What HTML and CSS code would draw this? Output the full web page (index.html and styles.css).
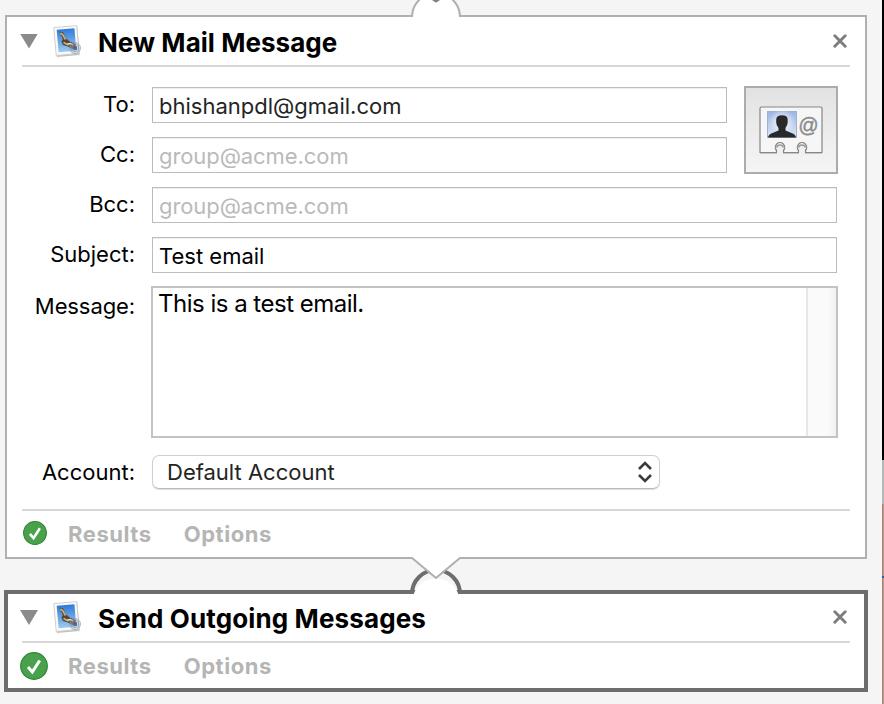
FILE: index.html
```html
<!DOCTYPE html>
<html lang="en">
<head>
<meta charset="utf-8">
<title>Mail workflow</title>
<link rel="stylesheet" href="styles.css">
</head>
<body>
<svg width="0" height="0" class="defs" aria-hidden="true">
  <defs>
    <linearGradient id="sky" x1="0" y1="0" x2="0" y2="1"><stop offset="0" stop-color="#2f7bd6"/><stop offset="1" stop-color="#9cc9f4"/></linearGradient>
    <linearGradient id="photo" x1="0" y1="0" x2="0" y2="1"><stop offset="0" stop-color="#9db4e2"/><stop offset="1" stop-color="#dce8f8"/></linearGradient>
    <radialGradient id="glow"><stop offset="0" stop-color="#fff"/><stop offset="1" stop-color="#fff" stop-opacity="0"/></radialGradient>
    <symbol id="stamp" viewBox="0 0 32 34">
      <g transform="rotate(-5 15 17)">
        <rect x="3.500" y="3.500" width="23" height="28.500" fill="#888" opacity=".5"/>
        <rect x="3" y="2.500" width="23" height="28" fill="#fafafa" stroke="#c8c8c8" stroke-width=".8"/>
        <rect x="5.700" y="5" width="17.800" height="22.500" fill="url(#sky)"/>
      </g>
      <path d="M7.300 7.500l3.800.8 3 6.200 4 3.200 4.800 1.800 2.500 5-5 .5-4.500-2.500-5-1.500-1.500-3.500 1.500-2.500z" fill="#594630"/>
      <path d="M8.500 9l2.200 1.500 2.800 5M11.500 18.500l5 2.500" fill="none" stroke="#c9b17e" stroke-width="1.700"/>
      <path d="M15.500 20l3-.5 2.500 1.500" fill="none" stroke="#e8e3cf" stroke-width="1.300"/>
      <circle cx="23" cy="24" r="5.500" fill="#a9bace" fill-opacity=".4" stroke="#8b9299" stroke-opacity=".6"/>
      <circle cx="23" cy="24" r="3.700" fill="none" stroke="#68798f" stroke-opacity=".6" stroke-width=".8"/>
      <rect x="21.500" y="22.500" width="3.500" height="3.500" fill="#355d94" opacity=".75"/>
    </symbol>
    <symbol id="close" viewBox="0 0 14 14"><path d="M1.800 1.800L12.200 12.200M12.200 1.800L1.800 12.200" stroke="#7d7d7d" stroke-width="2.900" fill="none" stroke-linecap="round"/></symbol>
    <symbol id="check" viewBox="0 0 28 28"><circle cx="14" cy="14" r="13.300" fill="#49a14b" stroke="#2f8538" stroke-width="1.200"/><path d="M8 15l4.300 5L19.700 8.500" fill="none" stroke="#fff" stroke-width="3"/></symbol>
  </defs>
</svg>
<div class="canvas">
  <section class="action compose">
    <svg class="notch notch-in" width="52" height="19" viewBox="0 0 52 19"><path d="M2 19V17A24 24 0 0 1 50 17V19Z" fill="#fff"/><path d="M2 17A24 24 0 0 1 50 17" fill="none" stroke="#b0b0b0" stroke-width="2"/><path d="M22 0L26 2.800L30 0Z" fill="#808080"/></svg>
    <header class="bar">
      <span class="triangle"></span>
      <svg class="stamp"><use href="#stamp"/></svg>
      <h2>New Mail Message</h2>
      <svg class="close"><use href="#close"/></svg>
    </header>
    <div class="form">
      <div class="recipients">
        <div class="lines">
          <div class="row"><span class="label">To:</span><div class="field soft">bhishanpdl@gmail.com</div></div>
          <div class="row"><span class="label">Cc:</span><div class="field hint">group@acme.com</div></div>
        </div>
        <div class="contacts">
          <svg width="68" height="54" viewBox="0 0 68 54">
            <path d="M3 6H65V51H48V46.500A4.500 4.500 0 1 0 42 46.500V51H26V46.500A4.500 4.500 0 1 0 20 46.500V51H3Z" fill="#aaa" opacity=".6"/>
            <path d="M4.500 4H63.500Q65 4 65 5.500V49.500H48.500V47.500A4.700 4.700 0 1 0 41.500 47.500V49.500H26.500V47.500A4.700 4.700 0 1 0 19.500 47.500V49.500H3V5.500Q3 4 4.500 4Z" fill="#f6f6f6" stroke="#858585" stroke-width="1.200" stroke-linejoin="round"/>
            <path d="M19.500 44.500A3.700 3.700 0 0 1 26.500 44.500M41.500 44.500A3.700 3.700 0 0 1 48.500 44.500" fill="none" stroke="#999" stroke-width="1.600"/>
            <path d="M21.500 46H24.500V51H21.500ZM43.500 46H46.500V51H43.500Z" fill="#efefef"/>
            <rect x="10.500" y="8.500" width="29" height="26" fill="url(#photo)" stroke="#9fb0d3"/>
            <ellipse cx="25" cy="19" rx="13" ry="13" fill="url(#glow)"/>
            <path d="M11 34.500Q11.500 31 15.500 30L21.500 27.500V25Q19.200 22.500 19.200 19.500V16.500Q19.500 12.300 25 12.300Q30.500 12.300 30.700 16.500V19.500Q30.500 22.500 28.500 25V27.500L34.500 30Q38.500 31 39 34.500Z" fill="#292929"/>
            <text x="41" y="29" class="at">@</text>
          </svg>
        </div>
      </div>
      <div class="row"><span class="label">Bcc:</span><div class="field hint">group@acme.com</div></div>
      <div class="row"><span class="label">Subject:</span><div class="field">Test email</div></div>
      <div class="row message-row"><span class="label">Message:</span><div class="message"><span class="body-text">This is a test email.</span><span class="scroller"></span></div></div>
      <div class="row account-row"><span class="label">Account:</span><div class="select"><span>Default Account</span><svg width="16" height="22" viewBox="0 0 16 22"><path d="M2 8L8 2L14 8M2 14L8 20L14 14" fill="none" stroke="#3c3c3c" stroke-width="2.600"/></svg></div></div>
    </div>
    <footer class="foot">
      <svg class="check small"><use href="#check"/></svg>
      <span class="tab">Results</span><span class="tab">Options</span>
    </footer>
  </section>
  <section class="action send">
    <svg class="notch notch-join" width="56" height="40" viewBox="0 0 56 40"><path d="M6 40V36A24 24 0 0 1 50 36V40Z" fill="#fff"/><path d="M4 37A24 24 0 0 1 52 37" fill="none" stroke="#6d6d70" stroke-width="4"/><path d="M4 0L28 20L52 0Z" fill="#fff"/><path d="M4 1L28 21L52 1" fill="none" stroke="#b0b0b0" stroke-width="2"/></svg>
    <header class="bar">
      <span class="triangle"></span>
      <svg class="stamp"><use href="#stamp"/></svg>
      <h2>Send Outgoing Messages</h2>
      <svg class="close"><use href="#close"/></svg>
    </header>
    <footer class="foot">
      <svg class="check"><use href="#check"/></svg>
      <span class="tab">Results</span><span class="tab">Options</span>
    </footer>
  </section>
</div>
<aside class="backdrop"><div class="dark"></div><div class="gray"></div><div class="pink"></div><div class="blue"></div><div class="pink rest"></div></aside>
</body>
</html>
```
FILE: styles.css
```css
* { box-sizing: border-box; }
body { margin: 0; height: 704px; display: flex; overflow: hidden; background: #f5f5f5; color: #000; font: 400 22px/30px Inter, "Liberation Sans", sans-serif; }
svg { display: block; flex: none; }
.defs { position: absolute; }
.canvas { width: 882px; padding: 15px 14px 0 4px; }
.action { position: relative; background: #fff; }
.compose { width: 862px; height: 544px; margin-left: 1px; border: 2px solid #b0b0b0; padding: 0 15px; }
.send { width: 864px; height: 102px; margin-top: 31px; border: 4px solid #6d6d70; padding: 0 14px; }
.notch { position: absolute; }
.notch-in { left: 403px; top: -17px; }
.notch-join { left: 400px; top: -37px; }
.bar { display: flex; align-items: center; height: 50px; border-bottom: 2px solid #d7d7d7; }
.send .bar { height: 49px; }
.send .stamp, .send .close { margin-bottom: 2px; }
.triangle { width: 18px; height: 15px; margin-left: -2px; background: #8b8b8b; clip-path: polygon(0 0, 100% 0, 50% 100%); }
.stamp { width: 32px; height: 34px; margin-left: 14px; }
h2 { flex: 1; margin: 4px 0 0 14px; font-size: 26px; line-height: 32px; font-weight: 700; letter-spacing: 0.04px; white-space: nowrap; }
.send h2 { margin-top: 2px; letter-spacing: 0.12px; }
.close { width: 14px; height: 14px; margin-right: 3px; }
.form { height: 442px; padding: 20px 13px 0 0; display: flex; flex-direction: column; gap: 14px; }
.recipients { display: flex; gap: 17px; margin-right: -1px; }
.lines { flex: 1; display: flex; flex-direction: column; gap: 14px; }
.row { display: flex; height: 36px; align-items: center; }
.label { width: 113px; margin: 0 17px 2px 0; text-align: right; flex: none; }
.field { flex: 1; height: 36px; padding: 3px 6px 0; border: 1px solid #bcbcbc; box-shadow: inset 0 1px #eee; }
.soft { color: #242424; }
.hint { color: #bababa; letter-spacing: -0.08px; }
.contacts { width: 94px; height: 88px; margin-top: -1px; margin-bottom: -1px; border: 2px solid #acacac; background: linear-gradient(#e2e2e2, #f5f5f5); display: flex; align-items: center; justify-content: center; }
.at { font: italic 20px "Liberation Sans", sans-serif; fill: #8b8b8b; stroke: #8b8b8b; stroke-width: 0.4px; }
.message-row { height: 152px; margin-top: -1px; align-items: flex-start; }
.message-row .label { margin-right: 16px; margin-top: 5px; letter-spacing: -0.1px; }
.message { flex: 1; height: 152px; margin-right: -1px; border: 2px solid #c3c3c3; display: flex; }
.body-text { flex: 1; padding-left: 5px; font-size: 24px; line-height: 32px; letter-spacing: -0.5px; }
.scroller { width: 30px; background: linear-gradient(90deg, #fafafa 70%, #f1f1f1); border-left: 2px solid #e7e7e7; }
.account-row { height: 35px; margin-top: 2px; }
.account-row .label { margin-bottom: 0; }
.select { width: 508px; height: 34px; padding: 0 6px 0 14px; border: 1px solid #cfcfcf; border-bottom-color: #b8b8b8; border-radius: 7px; box-shadow: 0 1px 1px #e0e0e0; display: flex; align-items: center; justify-content: space-between; color: #242424; }
.foot { height: 48px; border-top: 2px solid #d7d7d7; display: flex; align-items: center; color: #b5b5b5; font-weight: 700; }
.compose .foot { height: 46px; }
.send .foot { height: 46px; border-top: 0; }
.send .foot .tab { margin-top: 0; }
.check { width: 28px; height: 28px; margin-left: -2px; margin-right: 20px; }
.check.small { width: 24px; height: 24px; margin-left: 1px; margin-right: 21px; }
.tab { margin: 1px 32px 0 0; letter-spacing: 0.55px; }
.backdrop { width: 2px; height: 704px; display: flex; flex-direction: column; }
.dark { height: 460px; background: #000; }
.gray { height: 44px; background: #b4b8b6; }
.pink { height: 72px; background: linear-gradient(90deg, #a08078 50%, #c79a88 50%); }
.blue { height: 2px; background: #345a9c; }
.pink.rest { height: auto; flex: 1; }
```
